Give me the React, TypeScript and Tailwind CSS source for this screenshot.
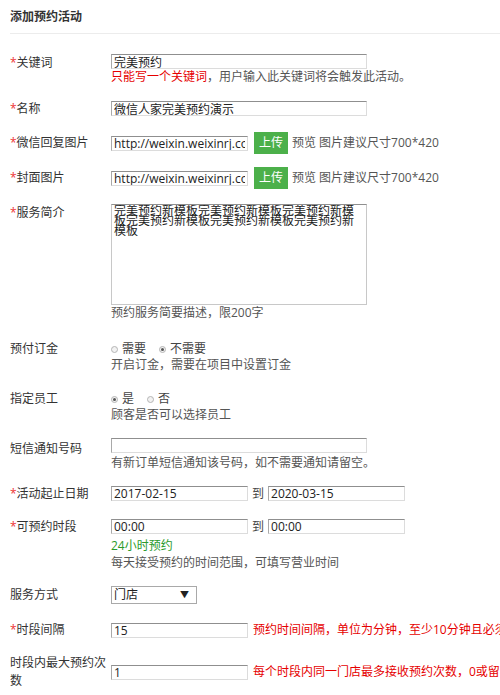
import React from "react";

const inputCls =
  "block h-[15px] border border-t-[#8f8f8f] border-l-[#a9a9a9] border-r-[#dcdcdc] border-b-[#dcdcdc] bg-white px-[2px] py-0 leading-[13px] text-[12px] text-[#222] outline-none";

function Star() {
  return <span className="text-[#e33]">*</span>;
}

function Field({ value, w }: { value: string; w: string }) {
  return <input readOnly defaultValue={value} className={`${inputCls} ${w} shrink-0`} />;
}

function Radio({ checked }: { checked?: boolean }) {
  return (
    <span className="inline-flex h-[7px] w-[7px] items-center justify-center rounded-full border border-[#b5b5b5] bg-[#f2f2f2]">
      {checked ? <span className="h-[3px] w-[3px] rounded-full bg-[#555]" /> : null}
    </span>
  );
}

function UploadRow({ label, mt }: { label: string; mt: string }) {
  return (
    <div className={`flex items-center ${mt}`}>
      <div className="w-[111px] shrink-0 pl-[10px] leading-[22px]">
        <Star />
        {label}
      </div>
      <Field value="http://weixin.weixinrj.com/attachment/images/2017/02/cover.jpg" w="w-[137px]" />
      <div className="ml-[6px] flex h-[22px] w-[34px] shrink-0 items-center justify-center bg-[#4cb04a] text-white">上传</div>
      <div className="ml-[4px] whitespace-nowrap text-[#555]">预览 图片建议尺寸700*420</div>
    </div>
  );
}

export default function App() {
  return (
    <div className="min-h-[695px] w-[500px] overflow-hidden bg-white text-[12px] text-[#333] font-['Open_Sans','Noto_Sans_CJK_SC',sans-serif]">
      <div className="ml-[10px] border-b border-[#ececec] pt-[9px] pb-[8px] font-bold leading-[16px]">添加预约活动</div>

      {/* 关键词 */}
      <div className="mt-[20px] flex items-start">
        <div className="w-[111px] shrink-0 pl-[10px] pt-[1px] leading-[16px]">
          <Star />关键词
        </div>
        <div className="flex flex-col">
          <Field value="完美预约" w="w-[256px]" />
          <div className="leading-[16px] whitespace-nowrap">
            <span className="text-[#e60000]">只能写一个关键词</span>
            <span className="text-[#555]">，用户输入此关键词将会触发此活动。</span>
          </div>
        </div>
      </div>

      {/* 名称 */}
      <div className="mt-[16px] flex items-start">
        <div className="w-[111px] shrink-0 pl-[10px] leading-[16px]">
          <Star />名称
        </div>
        <Field value="微信人家完美预约演示" w="w-[256px]" />
      </div>

      <UploadRow label="微信回复图片" mt="mt-[15px]" />
      <UploadRow label="封面图片" mt="mt-[13px]" />

      {/* 服务简介 */}
      <div className="mt-[15px] flex items-start">
        <div className="w-[111px] shrink-0 pl-[10px] pt-[1px] leading-[16px]">
          <Star />服务简介
        </div>
        <div className="flex flex-col">
          <textarea
            readOnly
            defaultValue="完美预约新模板完美预约新模板完美预约新模板完美预约新模板完美预约新模板完美预约新模板"
            className="block h-[101px] w-[256px] resize-none overflow-hidden border border-[#c8c8c8] border-t-[#8f8f8f] pl-[2px] pr-[4px] pt-[1px] pb-0 text-[12px] leading-[10px] text-[#222] outline-none"
          />
          <div className="leading-[16px] text-[#555]">预约服务简要描述，限200字</div>
        </div>
      </div>

      {/* 预付订金 */}
      <div className="mt-[20px] flex items-start">
        <div className="w-[111px] shrink-0 pl-[10px] leading-[16px]">预付订金</div>
        <div className="flex flex-col">
          <div className="flex items-center leading-[16px]">
            <Radio />
            <span className="ml-[4px] text-[#444]">需要</span>
            <span className="ml-[13px] flex"><Radio checked /></span>
            <span className="ml-[4px] text-[#444]">不需要</span>
          </div>
          <div className="leading-[16px] text-[#555]">开启订金，需要在项目中设置订金</div>
        </div>
      </div>

      {/* 指定员工 */}
      <div className="mt-[18px] flex items-start">
        <div className="w-[111px] shrink-0 pl-[10px] leading-[16px]">指定员工</div>
        <div className="flex flex-col">
          <div className="flex items-center leading-[16px]">
            <Radio checked />
            <span className="ml-[4px] text-[#444]">是</span>
            <span className="ml-[13px] flex"><Radio /></span>
            <span className="ml-[4px] text-[#444]">否</span>
          </div>
          <div className="leading-[16px] text-[#555]">顾客是否可以选择员工</div>
        </div>
      </div>

      {/* 短信通知号码 */}
      <div className="mt-[15px] flex items-start">
        <div className="w-[111px] shrink-0 pl-[10px] pt-[3px] leading-[16px]">短信通知号码</div>
        <div className="flex flex-col">
          <Field value="" w="w-[256px]" />
          <div className="mt-[2px] leading-[16px] text-[#555]">有新订单短信通知该号码，如不需要通知请留空。</div>
        </div>
      </div>

      {/* 活动起止日期 */}
      <div className="mt-[15px] flex items-start">
        <div className="w-[111px] shrink-0 pl-[10px] leading-[16px]">
          <Star />活动起止日期
        </div>
        <div className="flex items-center">
          <Field value="2017-02-15" w="w-[137px]" />
          <span className="mx-[4px] leading-[15px] text-[#444]">到</span>
          <Field value="2020-03-15" w="w-[137px]" />
        </div>
      </div>

      {/* 可预约时段 */}
      <div className="mt-[17px] flex items-start">
        <div className="w-[111px] shrink-0 pl-[10px] leading-[16px]">
          <Star />可预约时段
        </div>
        <div className="flex flex-col">
          <div className="flex items-center">
            <Field value="00:00" w="w-[137px]" />
            <span className="mx-[4px] leading-[15px] text-[#444]">到</span>
            <Field value="00:00" w="w-[137px]" />
          </div>
          <div className="mt-[3px] leading-[18px] text-[#2a9a2a]">24小时预约</div>
          <div className="leading-[16px] text-[#555]">每天接受预约的时间范围，可填写营业时间</div>
        </div>
      </div>

      {/* 服务方式 */}
      <div className="mt-[15px] flex items-start">
        <div className="w-[111px] shrink-0 pl-[10px] leading-[18px]">服务方式</div>
        <div className="flex h-[18px] w-[86px] items-center justify-between border border-[#a9a9a9] bg-white pl-[2px] pr-[7px] text-[#222]">
          <span className="leading-[16px]">门店</span>
          <span className="text-[9px] leading-[16px]">▼</span>
        </div>
      </div>

      {/* 时段间隔 */}
      <div className="mt-[18px] flex items-center">
        <div className="w-[111px] shrink-0 pl-[10px] leading-[16px]">
          <Star />时段间隔
        </div>
        <Field value="15" w="w-[137px]" />
        <span className="ml-[5px] whitespace-nowrap leading-[16px] text-[#e60000]">
          预约时间间隔，单位为分钟，至少10分钟且必须能被60整除
        </span>
      </div>

      {/* 时段内最大预约次数 */}
      <div className="mt-[16px] flex items-center">
        <div className="w-[111px] shrink-0 pl-[10px] pr-[2px] leading-[18px]">时段内最大预约次数</div>
        <Field value="1" w="w-[137px]" />
        <span className="ml-[5px] whitespace-nowrap leading-[16px] text-[#e60000]">
          每个时段内同一门店最多接收预约次数，0或留空为不限制
        </span>
      </div>
    </div>
  );
}
